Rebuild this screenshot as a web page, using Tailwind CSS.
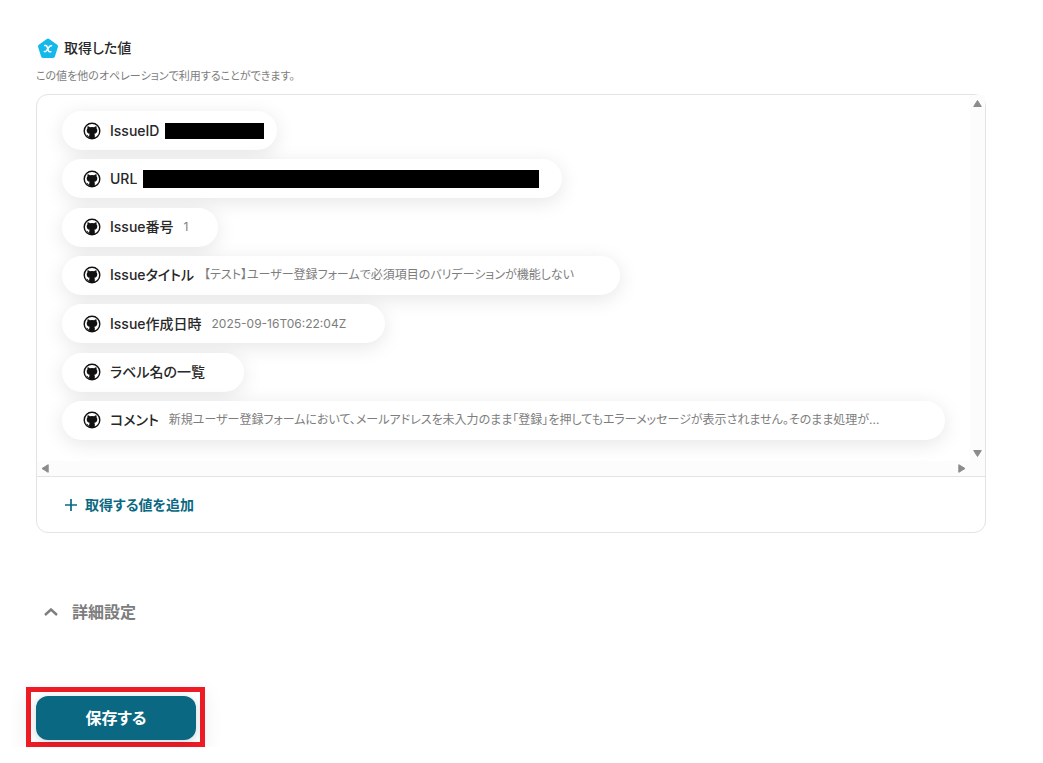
<!DOCTYPE html>
<html lang="ja">
<head>
  <meta charset="UTF-8" />
  <title>取得した値</title>
  <meta name="viewport" content="width=device-width, initial-scale=1" />
  <script src="https://cdn.jsdelivr.net/npm/@tailwindcss/browser@4"></script>
</head>
<body class="bg-white text-[#282828] font-['Inter','Noto_Sans_CJK_JP',sans-serif] [font-feature-settings:'palt']">

  <!-- Shared icon -->
  <svg class="hidden">
    <symbol id="github" viewBox="0 0 18 18">
      <circle cx="9" cy="9" r="7.8" fill="none" stroke="currentColor" stroke-width="1.4" />
      <path fill="currentColor" d="M4.600 4.300c.9 0 1.700.4 2.300.9a9 9 0 0 1 4.200 0c.6-.5 1.400-.9 2.300-.9.3.7.3 1.300.1 1.900.6.700.8 1.300.8 2.100 0 2.300-1.200 3.200-3 3.500.3.400.5.900.5 1.500v3.400H6.200v-1.900c-1.300.1-1.900-.5-2.300-1.200-.2-.4-.5-.7-.9-.9.9-.2 1.500.3 1.900.8.4.5.700.6 1.300.4.1-.9.2-1.700.5-2.100-1.900-.3-3-1.200-3-3.500 0-.8.300-1.400.8-2.100-.2-.6-.2-1.200.1-1.900z" />
    </symbol>
  </svg>

  <main class="pl-9 pr-[57px] pt-9">

    <!-- Heading -->
    <div class="flex items-center gap-1">
      <svg class="w-6 h-6" viewBox="0 0 24 24" aria-hidden="true">
        <path d="M12 4.500 20 10.300 17 20H7L4 10.300z" fill="#14b8ea" stroke="#14b8ea" stroke-width="4" stroke-linejoin="round" />
        <path d="M8.600 9.600h1.200c.6 0 .9.300 1.100.8l1.700 4.500c.2.500.5.8 1 .8h1.300M15.600 9.700c-1.200-.2-1.700.2-2.300 1l-2.700 3.900c-.6.9-1.200 1.200-2.300 1" fill="none" stroke="#fff" stroke-width="1.500" stroke-linecap="round" />
      </svg>
      <h2 class="text-sm leading-6 font-medium">取得した値</h2>
    </div>
    <p class="mt-2 text-[11px] leading-4 text-[#7d7d7d]">この値を他のオペレーションで利用することができます。</p>

    <!-- Value list -->
    <section class="mt-2.5 border border-[#e3e3e3] rounded-xl">
      <div class="relative pl-[25px] pr-10 pt-4 pb-9 overflow-hidden rounded-tl-xl">
        <ul class="h-[329px] flex flex-col justify-between items-start whitespace-nowrap text-sm font-medium">
          <li class="flex items-center h-[39px] min-w-[215px] pl-[21px] rounded-full bg-white shadow-[0_4px_20px_rgba(0,0,0,0.1)]">
            <svg class="w-[18px] h-[18px] mr-[9px] shrink-0 text-[#111]"><use href="#github" /></svg>
            <span>IssueID</span>
            <span class="ml-1.5 w-[99px] h-4 bg-black"></span>
          </li>
          <li class="flex items-center h-[39px] min-w-[500px] pl-[21px] rounded-full bg-white shadow-[0_4px_20px_rgba(0,0,0,0.1)]">
            <svg class="w-[18px] h-[18px] mr-[9px] shrink-0 text-[#111]"><use href="#github" /></svg>
            <span>URL</span>
            <span class="ml-1.5 w-[396px] h-[18px] bg-black"></span>
          </li>
          <li class="flex items-center h-[39px] min-w-[156px] pl-[21px] pr-7 rounded-full bg-white shadow-[0_4px_20px_rgba(0,0,0,0.1)]">
            <svg class="w-[18px] h-[18px] mr-[9px] shrink-0 text-[#111]"><use href="#github" /></svg>
            <span>Issue番号</span>
            <span class="ml-2.5 text-xs font-normal text-[#7d7d7d]">1</span>
          </li>
          <li class="flex items-center h-[39px] min-w-[558px] pl-[21px] pr-7 rounded-full bg-white shadow-[0_4px_20px_rgba(0,0,0,0.1)]">
            <svg class="w-[18px] h-[18px] mr-[9px] shrink-0 text-[#111]"><use href="#github" /></svg>
            <span>Issueタイトル</span>
            <span class="ml-2.5 text-xs font-normal text-[#7d7d7d]">【テスト】ユーザー登録フォームで必須項目のバリデーションが機能しない</span>
          </li>
          <li class="flex items-center h-[39px] min-w-[323px] pl-[21px] pr-7 rounded-full bg-white shadow-[0_4px_20px_rgba(0,0,0,0.1)]">
            <svg class="w-[18px] h-[18px] mr-[9px] shrink-0 text-[#111]"><use href="#github" /></svg>
            <span>Issue作成日時</span>
            <span class="ml-2.5 text-xs font-normal text-[#7d7d7d]">2025-09-16T06:22:04Z</span>
          </li>
          <li class="flex items-center h-[39px] min-w-[182px] pl-[21px] pr-7 rounded-full bg-white shadow-[0_4px_20px_rgba(0,0,0,0.1)]">
            <svg class="w-[18px] h-[18px] mr-[9px] shrink-0 text-[#111]"><use href="#github" /></svg>
            <span>ラベル名の一覧</span>
          </li>
          <li class="flex items-center h-[39px] min-w-[883px] pl-[21px] pr-7 rounded-full bg-white shadow-[0_4px_20px_rgba(0,0,0,0.1)]">
            <svg class="w-[18px] h-[18px] mr-[9px] shrink-0 text-[#111]"><use href="#github" /></svg>
            <span>コメント</span>
            <span class="ml-2.5 text-xs font-normal text-[#7d7d7d]">新規ユーザー登録フォームにおいて、メールアドレスを未入力のまま「登録」を押してもエラーメッセージが表示されません。そのまま処理が...</span>
          </li>
        </ul>

        <!-- Scrollbars -->
        <div class="absolute top-0 right-0 bottom-0 w-[15px] pt-1 pb-[18px] flex flex-col justify-between items-center bg-[#fcfcfc]">
          <svg class="w-[9px] h-[9px]" viewBox="0 0 9 9"><path d="M4.500 1.500 8.300 7.500H.7z" fill="#8b8b8b" stroke="#8b8b8b" stroke-linejoin="round" /></svg>
          <svg class="w-[9px] h-[9px]" viewBox="0 0 9 9"><path d="M4.500 7.500 8.300 1.500H.7z" fill="#8b8b8b" stroke="#8b8b8b" stroke-linejoin="round" /></svg>
        </div>
        <div class="absolute left-0 right-[15px] bottom-0 h-[15px] px-1 flex justify-between items-center bg-[#fcfcfc]">
          <svg class="w-[9px] h-[9px]" viewBox="0 0 9 9"><path d="M1 4.500 7.200.7v7.600z" fill="#8b8b8b" stroke="#8b8b8b" stroke-linejoin="round" /></svg>
          <svg class="w-[9px] h-[9px]" viewBox="0 0 9 9"><path d="M8 4.500 1.800.7v7.600z" fill="#8b8b8b" stroke="#8b8b8b" stroke-linejoin="round" /></svg>
        </div>
      </div>

      <div class="border-t border-[#e3e3e3] h-14 pl-7 flex items-center">
        <button type="button" class="flex items-center gap-2 text-sm font-semibold text-[#0b6882] cursor-pointer">
          <svg class="w-3 h-3" viewBox="0 0 12 12"><path d="M6 0v12M0 6h12" stroke="currentColor" stroke-width="1.700" /></svg>
          取得する値を追加
        </button>
      </div>
    </section>

    <!-- Advanced settings -->
    <button type="button" class="mt-[67px] ml-2 flex items-center gap-3.5 text-base font-semibold text-[#7d7d7d] cursor-pointer">
      <svg class="w-3.5 h-2" viewBox="0 0 14 8"><path d="m1 7 6-5.500L13 7" fill="none" stroke="currentColor" stroke-width="2.400" /></svg>
      詳細設定
    </button>

    <!-- Save -->
    <div class="mt-[63px] -ml-2.5 w-fit border-5 border-[#ed1c24] pl-[5px] pr-1 pt-1 pb-0.5 shadow-[0_6px_20px_rgba(20,40,80,0.08)]">
      <button type="button" class="block w-40 h-11 rounded-xl bg-[#0b6882] text-base font-bold text-white shadow-[0_2px_10px_rgba(20,40,80,0.2)] cursor-pointer">保存する</button>
    </div>
  </main>

</body>
</html>
